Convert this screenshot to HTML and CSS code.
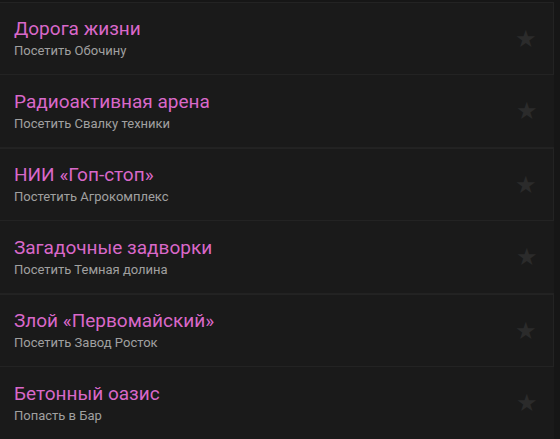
FILE: index.html
```html
<!DOCTYPE html>
<html lang="ru">
<head>
  <meta charset="UTF-8">
  <meta name="viewport" content="width=device-width, initial-scale=1.0">
  <title>Задания</title>
  <link rel="stylesheet" href="styles.css">
</head>
<body>

<div class="quest-list">
  <div class="quest quest-odd">
    <div class="quest-text">
      <div class="quest-title">Дорога жизни</div>
      <div class="quest-task">Посетить Обочину</div>
    </div>
    <span class="quest-star">&#9733;</span>
  </div>
  <div class="quest">
    <div class="quest-text">
      <div class="quest-title">Радиоактивная арена</div>
      <div class="quest-task">Посетить Свалку техники</div>
    </div>
    <span class="quest-star">&#9733;</span>
  </div>
  <div class="quest quest-odd">
    <div class="quest-text">
      <div class="quest-title">НИИ «Гоп-стоп»</div>
      <div class="quest-task">Постетить Агрокомплекс</div>
    </div>
    <span class="quest-star">&#9733;</span>
  </div>
  <div class="quest">
    <div class="quest-text">
      <div class="quest-title">Загадочные задворки</div>
      <div class="quest-task">Посетить Темная долина</div>
    </div>
    <span class="quest-star">&#9733;</span>
  </div>
  <div class="quest quest-odd">
    <div class="quest-text">
      <div class="quest-title">Злой «Первомайский»</div>
      <div class="quest-task">Посетить Завод Росток</div>
    </div>
    <span class="quest-star">&#9733;</span>
  </div>
  <div class="quest">
    <div class="quest-text">
      <div class="quest-title">Бетонный оазис</div>
      <div class="quest-task">Попасть в Бар</div>
    </div>
    <span class="quest-star">&#9733;</span>
  </div>
</div>

</body>
</html>
```

FILE: styles.css
```css
body {
  margin: 0;
  background-color: #161616;
  font-family: Roboto, "Noto Sans", sans-serif;
}

.quest-list {
  width: 554px;
  padding-top: 2px;
}

.quest {
  display: flex;
  align-items: center;
  height: 73px;
  padding: 0 16px 0 14px;
  box-sizing: border-box;
  background-color: #1a1a1a;
  border-bottom: 1px solid #222;
}

.quest-odd {
  border: 1px solid #232323;
  border-left: none;
}

.quest-text {
  flex: 1;
}

.quest-title {
  font-size: 19px;
  color: #d968c9;
  line-height: 23px;
}

.quest-task {
  margin-top: 2px;
  font-size: 13px;
  color: #a0a0a0;
  line-height: 18px;
}

.quest-star {
  font-size: 24px;
  color: #2b2b2b;
}
```
